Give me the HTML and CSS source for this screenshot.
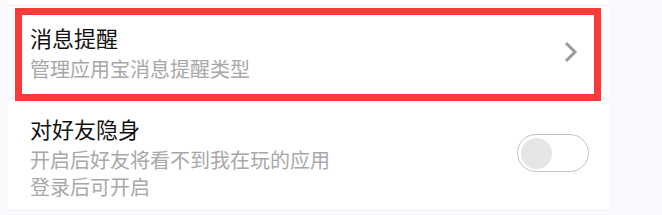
FILE: index.html
```html
<!DOCTYPE html>
<html lang="zh-CN">
<head>
<meta charset="UTF-8">
<meta name="viewport" content="width=device-width, initial-scale=1.0">
<title>设置</title>
<link rel="stylesheet" href="styles.css">
</head>
<body>
<div class="page">
  <div class="card">
    <div class="prevRow"></div>

    <div class="row">
      <div class="texts">
        <div class="title">消息提醒</div>
        <div class="sub">管理应用宝消息提醒类型</div>
      </div>
      <svg class="chevron" width="14" height="22" viewBox="0 0 14 22">
        <path d="M3 3 L11 11 L3 19" fill="none" stroke="#9a9a9a" stroke-width="3" stroke-linecap="square"/>
      </svg>
      <div class="highlight"></div>
    </div>

    <div class="row tall">
      <div class="texts">
        <div class="title">对好友隐身</div>
        <div class="sub">开启后好友将看不到我在玩的应用</div>
        <div class="sub">登录后可开启</div>
      </div>
      <div class="toggle">
        <div class="knob"></div>
      </div>
    </div>
  </div>
</div>
</body>
</html>
```

FILE: styles.css
```css
body {
  margin: 0;
  background: #f8f9fd;
  font-family: "Noto Sans CJK SC", "Noto Sans", sans-serif;
  overflow: hidden;
}

.page {
  padding-left: 8px;
  width: 601px;
}

.card {
  background: #ffffff;
}

.prevRow {
  height: 5px;
  border-bottom: 1px solid #ededed;
}

.row {
  position: relative;
  display: flex;
  align-items: center;
  justify-content: space-between;
  height: 92px;
  padding: 0 31px 0 22px;
  border-bottom: 1px solid #ededed;
}

.row.tall {
  height: 111px;
  padding-right: 20px;
  align-items: flex-start;
}

.row.tall .texts {
  padding-top: 14px;
}

.title {
  font-size: 22px;
  line-height: 30px;
  color: #111111;
}

.sub {
  font-size: 20px;
  line-height: 27px;
  color: #a8a8a8;
}

.title + .sub {
  margin-top: 3px;
}

.chevron {
  display: block;
}

.highlight {
  position: absolute;
  left: 7px;
  top: 2px;
  width: 572px;
  height: 79px;
  border: 7px solid #fc3a3a;
}

.toggle {
  margin-top: 35px;
  width: 67px;
  height: 36px;
  border: 1.5px solid #c2c2c2;
  border-radius: 20px;
  display: flex;
  align-items: center;
  padding-left: 3px;
  box-sizing: content-box;
}

.knob {
  width: 31px;
  height: 31px;
  border-radius: 50%;
  background: #e6e6e6;
}
```
